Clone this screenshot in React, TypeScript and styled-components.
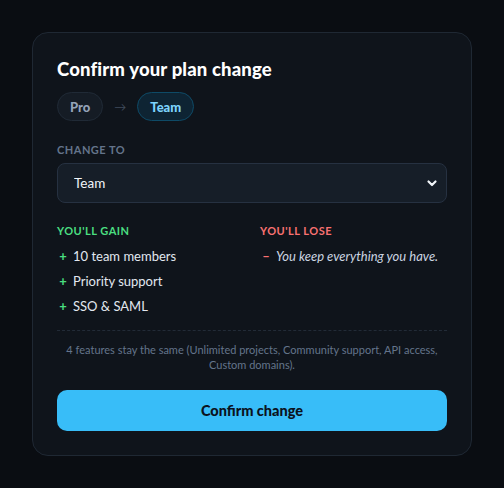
import React, { useState } from "react";
import styled, { createGlobalStyle } from "styled-components";

const Global = createGlobalStyle`
  html, body { margin: 0; padding: 0; background: #0a0d12; }
  body { font-family: Lato, "Noto Sans", sans-serif; color: #e2e8f0; }
  * { box-sizing: border-box; }
`;

const Page = styled.div`
  padding: 32px;
  min-height: 488px;
`;

const Card = styled.div`
  background: #0f141b;
  border: 1px solid #1f2833;
  border-radius: 16px;
  padding: 24px;
  display: flex;
  flex-direction: column;
`;

const Title = styled.h2`
  margin: 0;
  font-size: 18.5px;
  line-height: 24px;
  font-weight: 900;
  letter-spacing: 0.15px;
  color: #ffffff;
`;

const PillRow = styled.div`
  display: flex;
  align-items: center;
  gap: 11px;
  margin-top: 11px;
`;

const Pill = styled.span<{ $active?: boolean }>`
  display: inline-flex;
  align-items: center;
  height: 29px;
  padding: 0 12px;
  border-radius: 999px;
  font-size: 13px;
  font-weight: 900;
  border: 1px solid ${(p) => (p.$active ? "#0e4a66" : "#202a36")};
  background: ${(p) => (p.$active ? "#0e2433" : "#151c25")};
  color: ${(p) => (p.$active ? "#7dd3fc" : "#94a3b8")};
`;

const Arrow = styled.span`
  color: #3f4b5c;
  font-size: 12px;
`;

const Label = styled.div<{ $color?: string }>`
  font-size: 11px;
  line-height: 16px;
  font-weight: 700;
  letter-spacing: 0.5px;
  text-transform: uppercase;
  color: ${(p) => p.$color || "#64748b"};
`;

const Field = styled.div`
  margin-top: 21px;
  display: flex;
  flex-direction: column;
  gap: 5px;
`;

const SelectWrap = styled.div`
  position: relative;
`;

const Select = styled.select`
  width: 100%;
  height: 40px;
  appearance: none;
  -webkit-appearance: none;
  background: #161e28;
  border: 1px solid #263141;
  border-radius: 8px;
  color: #f1f5f9;
  font-family: inherit;
  font-size: 13.5px;
  padding: 0 16px;
  outline: none;
`;

const Chevron = styled.svg`
  position: absolute;
  right: 7px;
  top: 50%;
  transform: translateY(-50%);
  pointer-events: none;
`;

const Columns = styled.div`
  display: grid;
  grid-template-columns: 1fr 1fr;
  column-gap: 16px;
  margin-top: 20px;
`;

const Column = styled.div`
  display: flex;
  flex-direction: column;
`;

const List = styled.ul`
  list-style: none;
  margin: 7px 0 0;
  padding: 0;
  display: flex;
  flex-direction: column;
  gap: 5px;
`;

const Item = styled.li<{ $italic?: boolean }>`
  display: flex;
  align-items: center;
  gap: 5px;
  font-size: 13px;
  line-height: 20px;
  color: ${(p) => (p.$italic ? "#cbd5e1" : "#e2e8f0")};
  font-style: ${(p) => (p.$italic ? "italic" : "normal")};
  white-space: nowrap;
`;

const Mark = styled.span<{ $color: string }>`
  width: 10px;
  font-style: normal;
  font-weight: 700;
  color: ${(p) => p.$color};
  margin-left: 1px;
  font-size: 13px;
  text-align: center;
`;

const Note = styled.p`
  margin: 14px 0 0;
  padding-top: 11px;
  border-top: 1px dashed #222b37;
  text-align: center;
  font-size: 11px;
  line-height: 15px;
  color: #64748b;
`;

const Button = styled.button`
  margin-top: 18px;
  height: 41px;
  border: none;
  border-radius: 10px;
  background: #38bdf8;
  color: #0b1220;
  font-family: inherit;
  font-size: 14.5px;
  font-weight: 900;
  cursor: pointer;
`;

export default function App() {
  const [plan, setPlan] = useState("Team");
  return (
    <>
      <Global />
      <Page>
        <Card>
          <Title>Confirm your plan change</Title>
          <PillRow>
            <Pill>Pro</Pill>
            <Arrow>→</Arrow>
            <Pill $active>Team</Pill>
          </PillRow>
          <Field>
            <Label>Change to</Label>
            <SelectWrap>
              <Select value={plan} onChange={(e) => setPlan(e.target.value)}>
                <option>Free</option>
                <option>Pro</option>
                <option>Team</option>
                <option>Enterprise</option>
              </Select>
              <Chevron width="16" height="16" viewBox="0 0 16 16">
                <path d="M4.5 6.5l3.5 3.5 3.5-3.5" fill="none" stroke="#f1f5f9" strokeWidth="2.2" strokeLinecap="round" strokeLinejoin="round" />
              </Chevron>
            </SelectWrap>
          </Field>
          <Columns>
            <Column>
              <Label $color="#4ade80">You'll gain</Label>
              <List>
                <Item><Mark $color="#4ade80">+</Mark>10 team members</Item>
                <Item><Mark $color="#4ade80">+</Mark>Priority support</Item>
                <Item><Mark $color="#4ade80">+</Mark>SSO &amp; SAML</Item>
              </List>
            </Column>
            <Column>
              <Label $color="#f87171">You'll lose</Label>
              <List>
                <Item $italic><Mark $color="#f87171">–</Mark>You keep everything you have.</Item>
              </List>
            </Column>
          </Columns>
          <Note>
            4 features stay the same (Unlimited projects, Community support, API access, Custom domains).
          </Note>
          <Button>Confirm change</Button>
        </Card>
      </Page>
    </>
  );
}
